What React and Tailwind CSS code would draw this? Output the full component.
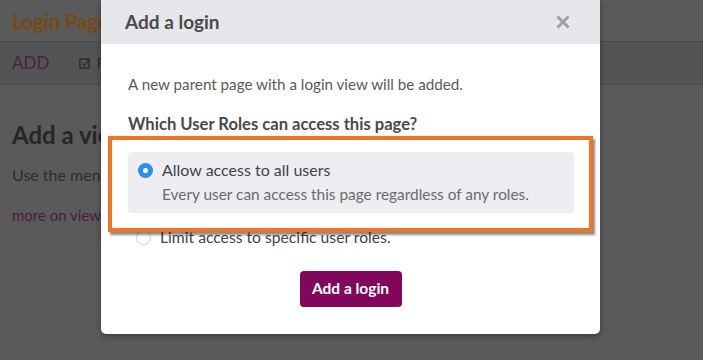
export default function App() {
  return (
    <div
      className="relative w-[703px] h-[360px] overflow-hidden bg-[#5a5a5a]"
      style={{ fontFamily: "Lato, 'Open Sans', sans-serif" }}
    >
      {/* dimmed background page */}
      <div className="h-[41px] flex items-center px-[12px]">
        <span className="text-[20px] font-bold text-[#7a4810]">Login Page</span>
      </div>
      <div className="h-[44px] bg-[#535456] border-y border-[#4b4b4c] flex items-center px-[12px] gap-[30px]">
        <span className="text-[17px] text-[#4f1f44]">ADD</span>
        <span className="flex items-center gap-[5px] text-[15px] text-[#2f2f2f]">
          <svg width="12" height="12" viewBox="0 0 12 12">
            <rect x="1" y="2" width="9" height="9" fill="none" stroke="#2f2f2f" strokeWidth="1.6" />
            <path d="M3.5 6.5 L5.5 8.5 L10.5 2" fill="none" stroke="#2f2f2f" strokeWidth="1.6" />
          </svg>
          F
        </span>
      </div>
      <div className="px-[12px] pt-[38px]">
        <div className="text-[24px] font-bold text-[#262626] leading-none">Add a view</div>
        <div className="mt-[18px] text-[16px] text-[#2e2e2e] leading-[20px]">Use the menu</div>
        <div className="mt-[20px] text-[15px] text-[#47203e] leading-[20px]">more on views</div>
      </div>

      {/* modal */}
      <div className="absolute left-[101px] top-0 w-[499px] h-[334px] bg-white rounded-b-[5px] shadow-[0_2px_6px_rgba(0,0,0,0.35)] overflow-hidden">
        <div className="h-[44px] bg-[#e6e7eb] flex items-center justify-between pl-[24px] pr-[30px]">
          <span className="text-[19px] font-bold text-[#4a4a4a] pt-[1px]">Add a login</span>
          <svg width="14" height="14" viewBox="0 0 14 14">
            <path d="M1.5 1.5 L12.5 12.5 M12.5 1.5 L1.5 12.5" stroke="#a1a1a5" strokeWidth="3" strokeLinecap="butt" />
          </svg>
        </div>
        <div className="pl-[27px] pt-[30px]">
          <p className="text-[15.2px] text-[#5a5a5a] leading-[20px]">
            A new parent page with a login view will be added.
          </p>
          <p className="mt-[20px] text-[16.6px] font-bold text-[#4a4a4a] leading-[20px] tracking-[0px]">
            Which User Roles can access this page?
          </p>
        </div>
        <div className="relative mt-[2px] ml-[7px] w-[485px] h-[96px] border-[4px] border-[#f07423] shadow-[2px_3px_2px_rgba(0,0,0,0.45)] p-[12px_15px_14px_16px]">
          <div className="h-[61px] bg-[#ededf2] rounded-[4px] flex items-start pl-[10px] pt-[8px] gap-[9px]">
            <span className="mt-[3px] w-[15px] h-[15px] rounded-full bg-[#2d8df1] flex items-center justify-center shrink-0">
              <span className="w-[5px] h-[5px] rounded-full bg-white" />
            </span>
            <div>
              <div className="text-[16px] text-[#444] leading-[20px]">Allow access to all users</div>
              <div className="mt-[4px] text-[15.4px] text-[#6b6b6b] leading-[20px]">
                Every user can access this page regardless of any roles.
              </div>
            </div>
          </div>
        </div>
        <div className="mt-[-5px] ml-[35px] flex items-center gap-[9px]">
          <span className="w-[15px] h-[15px] rounded-full border border-[#cfcfd4] bg-white shrink-0" />
          <span className="text-[15.7px] text-[#444] leading-[20px]">Limit access to specific user roles.</span>
        </div>
        <div className="mt-[24px] flex justify-center">
          <button className="w-[102px] h-[36px] rounded-[4px] bg-[#80075b] text-white text-[15.5px] font-bold">
            Add a login
          </button>
        </div>
      </div>
    </div>
  );
}
